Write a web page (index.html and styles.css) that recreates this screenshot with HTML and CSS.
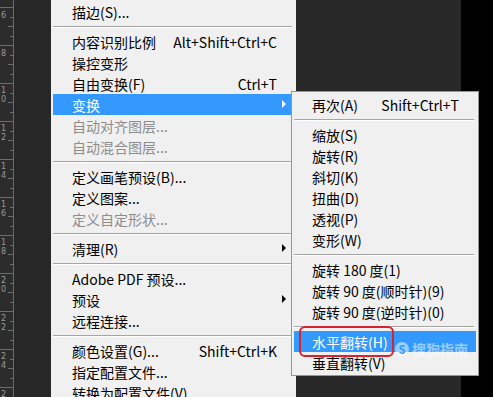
FILE: index.html
```html
<!DOCTYPE html>
<html>
<head>
<meta charset="utf-8">
<title>编辑菜单 - 变换</title>
<link rel="stylesheet" href="styles.css">
</head>
<body>
<div class="screen">
    <div class="ruler">
        <svg width="14" height="397" viewBox="0 0 14 397" xmlns="http://www.w3.org/2000/svg">
            <line x1="13.5" y1="0" x2="13.5" y2="397" stroke="#6c6c6c"/>
            <g stroke="#6c6c6c" id="ticks"></g>
            <g class="ruler-num" fill="#9a9a9a" font-size="8">
                <text x="1" y="18">6</text>
                <text x="1" y="56">8</text>
                <text x="1" y="93">1</text><text x="1" y="102">0</text>
                <text x="1" y="131">1</text><text x="1" y="140">2</text>
                <text x="1" y="169">1</text><text x="1" y="178">4</text>
                <text x="1" y="207">1</text><text x="1" y="216">6</text>
                <text x="1" y="245">1</text><text x="1" y="254">8</text>
                <text x="1" y="283">2</text><text x="1" y="292">0</text>
                <text x="1" y="321">2</text><text x="1" y="330">2</text>
                <text x="1" y="359">2</text><text x="1" y="368">4</text>
                <text x="1" y="397">2</text>
            </g>
        </svg>
    </div>
    <div class="gutter"></div>

    <div class="menu main">
        <div class="item"><span class="label">描边(S)...</span><span class="key"></span><span class="sub-arrow"></span></div>
        <div class="sep"></div>
        <div class="item"><span class="label">内容识别比例</span><span class="key">Alt+Shift+Ctrl+C</span><span class="sub-arrow"></span></div>
        <div class="item"><span class="label">操控变形</span><span class="key"></span><span class="sub-arrow"></span></div>
        <div class="item"><span class="label">自由变换(F)</span><span class="key">Ctrl+T</span><span class="sub-arrow"></span></div>
        <div class="item active"><span class="label">变换</span><span class="key"></span><span class="sub-arrow"><i class="tri"></i></span></div>
        <div class="item off"><span class="label">自动对齐图层...</span><span class="key"></span><span class="sub-arrow"></span></div>
        <div class="item off"><span class="label">自动混合图层...</span><span class="key"></span><span class="sub-arrow"></span></div>
        <div class="sep"></div>
        <div class="item"><span class="label">定义画笔预设(B)...</span><span class="key"></span><span class="sub-arrow"></span></div>
        <div class="item"><span class="label">定义图案...</span><span class="key"></span><span class="sub-arrow"></span></div>
        <div class="item off"><span class="label">定义自定形状...</span><span class="key"></span><span class="sub-arrow"></span></div>
        <div class="sep"></div>
        <div class="item"><span class="label">清理(R)</span><span class="key"></span><span class="sub-arrow"><i class="tri"></i></span></div>
        <div class="sep"></div>
        <div class="item"><span class="label">Adobe PDF 预设...</span><span class="key"></span><span class="sub-arrow"></span></div>
        <div class="item"><span class="label">预设</span><span class="key"></span><span class="sub-arrow"><i class="tri"></i></span></div>
        <div class="item"><span class="label">远程连接...</span><span class="key"></span><span class="sub-arrow"></span></div>
        <div class="sep"></div>
        <div class="item"><span class="label">颜色设置(G)...</span><span class="key">Shift+Ctrl+K</span><span class="sub-arrow"></span></div>
        <div class="item"><span class="label">指定配置文件...</span><span class="key"></span><span class="sub-arrow"></span></div>
        <div class="item"><span class="label">转换为配置文件(V)...</span><span class="key"></span><span class="sub-arrow"></span></div>
    </div>

    <div class="canvas"></div>
    <div class="edge"></div>

    <!-- submenu of 变换 -->
    <div class="menu sub">
        <div class="item"><span class="label">再次(A)</span><span class="key">Shift+Ctrl+T</span><span class="sub-arrow"></span></div>
        <div class="sep"></div>
        <div class="item"><span class="label">缩放(S)</span><span class="key"></span><span class="sub-arrow"></span></div>
        <div class="item"><span class="label">旋转(R)</span><span class="key"></span><span class="sub-arrow"></span></div>
        <div class="item"><span class="label">斜切(K)</span><span class="key"></span><span class="sub-arrow"></span></div>
        <div class="item"><span class="label">扭曲(D)</span><span class="key"></span><span class="sub-arrow"></span></div>
        <div class="item"><span class="label">透视(P)</span><span class="key"></span><span class="sub-arrow"></span></div>
        <div class="item"><span class="label">变形(W)</span><span class="key"></span><span class="sub-arrow"></span></div>
        <div class="sep"></div>
        <div class="item"><span class="label">旋转 180 度(1)</span><span class="key"></span><span class="sub-arrow"></span></div>
        <div class="item"><span class="label">旋转 90 度(顺时针)(9)</span><span class="key"></span><span class="sub-arrow"></span></div>
        <div class="item"><span class="label">旋转 90 度(逆时针)(0)</span><span class="key"></span><span class="sub-arrow"></span></div>
        <div class="sep"></div>
        <div class="item active"><span class="label">水平翻转(H)</span><span class="key"></span><span class="sub-arrow"></span></div>
        <div class="item"><span class="label">垂直翻转(V)</span><span class="key"></span><span class="sub-arrow"></span></div>
    </div>

    <div class="mark"></div>
    <div class="watermark"><span class="wm-logo">S</span>搜狗指南</div>
</div>

<script>
// ruler ticks: major every 38px, minor every 9.5px
var ticks = document.getElementById('ticks');
for (var i = 0; i < 44; i++) {
    var y = 7 + i * 9.5;
    var len = (i % 4 === 0) ? 13 : (i % 4 === 2 ? 5 : 3);
    var l = document.createElementNS('http://www.w3.org/2000/svg', 'line');
    l.setAttribute('x1', 13 - len);
    l.setAttribute('x2', 13);
    l.setAttribute('y1', Math.round(y) + 0.5);
    l.setAttribute('y2', Math.round(y) + 0.5);
    ticks.appendChild(l);
}
</script>
</body>
</html>
```

FILE: styles.css
```css
body {
    margin: 0;
    padding: 0;
    background: #000;
    font-family: "Noto Sans CJK SC", "Noto Sans", sans-serif;
    overflow: hidden;
}
.screen {
    position: relative;
    width: 493px;
    height: 397px;
    display: flex;
    overflow: hidden;
}
.ruler {
    width: 14px;
    background: #2c2c2c;
    flex: none;
}
.ruler svg {
    display: block;
}
.ruler-num {
    font-family: "DejaVu Sans", sans-serif;
}
.gutter {
    width: 37px;
    background: #272727;
    flex: none;
}
.canvas {
    width: 165px;
    background: #282828;
    flex: none;
}
.edge {
    flex: 1;
    background: #000;
}

/* menus */
.menu {
    background: #f0f0f0;
    font-size: 14px;
    color: #000;
    box-sizing: border-box;
}
.menu.main {
    width: 245px;
    flex: none;
    padding: 1px 2px 0 2px;
}
.menu.sub {
    position: absolute;
    left: 291px;
    top: 91px;
    width: 188px;
    border: 1px solid #979797;
    padding: 2px;
    z-index: 5;
}
.item {
    display: flex;
    height: 21px;
    line-height: 21px;
    padding-left: 19px;
    white-space: nowrap;
}
.menu.sub .item {
    padding-left: 18px;
}
.item .label {
    flex: 1;
    padding-top: 1px;
}
.item .key {
    padding-top: 1px;
}
.item .sub-arrow {
    width: 17px;
    flex: none;
    position: relative;
}
.tri {
    position: absolute;
    left: 5px;
    top: 6px;
    width: 0;
    height: 0;
    border-top: 4px solid transparent;
    border-bottom: 4px solid transparent;
    border-left: 4px solid #000;
}
.item.active {
    background: #3399ff;
    color: #fff;
}
.item.active .tri {
    border-left-color: #fff;
}
.item.off {
    color: #8d8d8d;
}
.sep {
    height: 0;
    margin: 4px 2px 3px 0;
    border-top: 1px solid #a5a5a5;
    border-bottom: 1px solid #fff;
}

/* red annotation around 水平翻转 */
.mark {
    position: absolute;
    left: 299px;
    top: 326px;
    width: 95px;
    height: 31px;
    box-sizing: border-box;
    border: 2px solid #dc2229;
    border-radius: 6px;
    z-index: 6;
}
.watermark {
    position: absolute;
    left: 395px;
    top: 340px;
    font-size: 14px;
    font-weight: bold;
    line-height: 18px;
    color: rgba(255, 255, 255, 0.5);
    display: flex;
    align-items: center;
    gap: 3px;
    z-index: 6;
    pointer-events: none;
}
.wm-logo {
    width: 14px;
    height: 14px;
    border-radius: 50%;
    background: rgba(255, 255, 255, 0.5);
    color: #3399ff;
    font-size: 11px;
    line-height: 14px;
    text-align: center;
}
```
